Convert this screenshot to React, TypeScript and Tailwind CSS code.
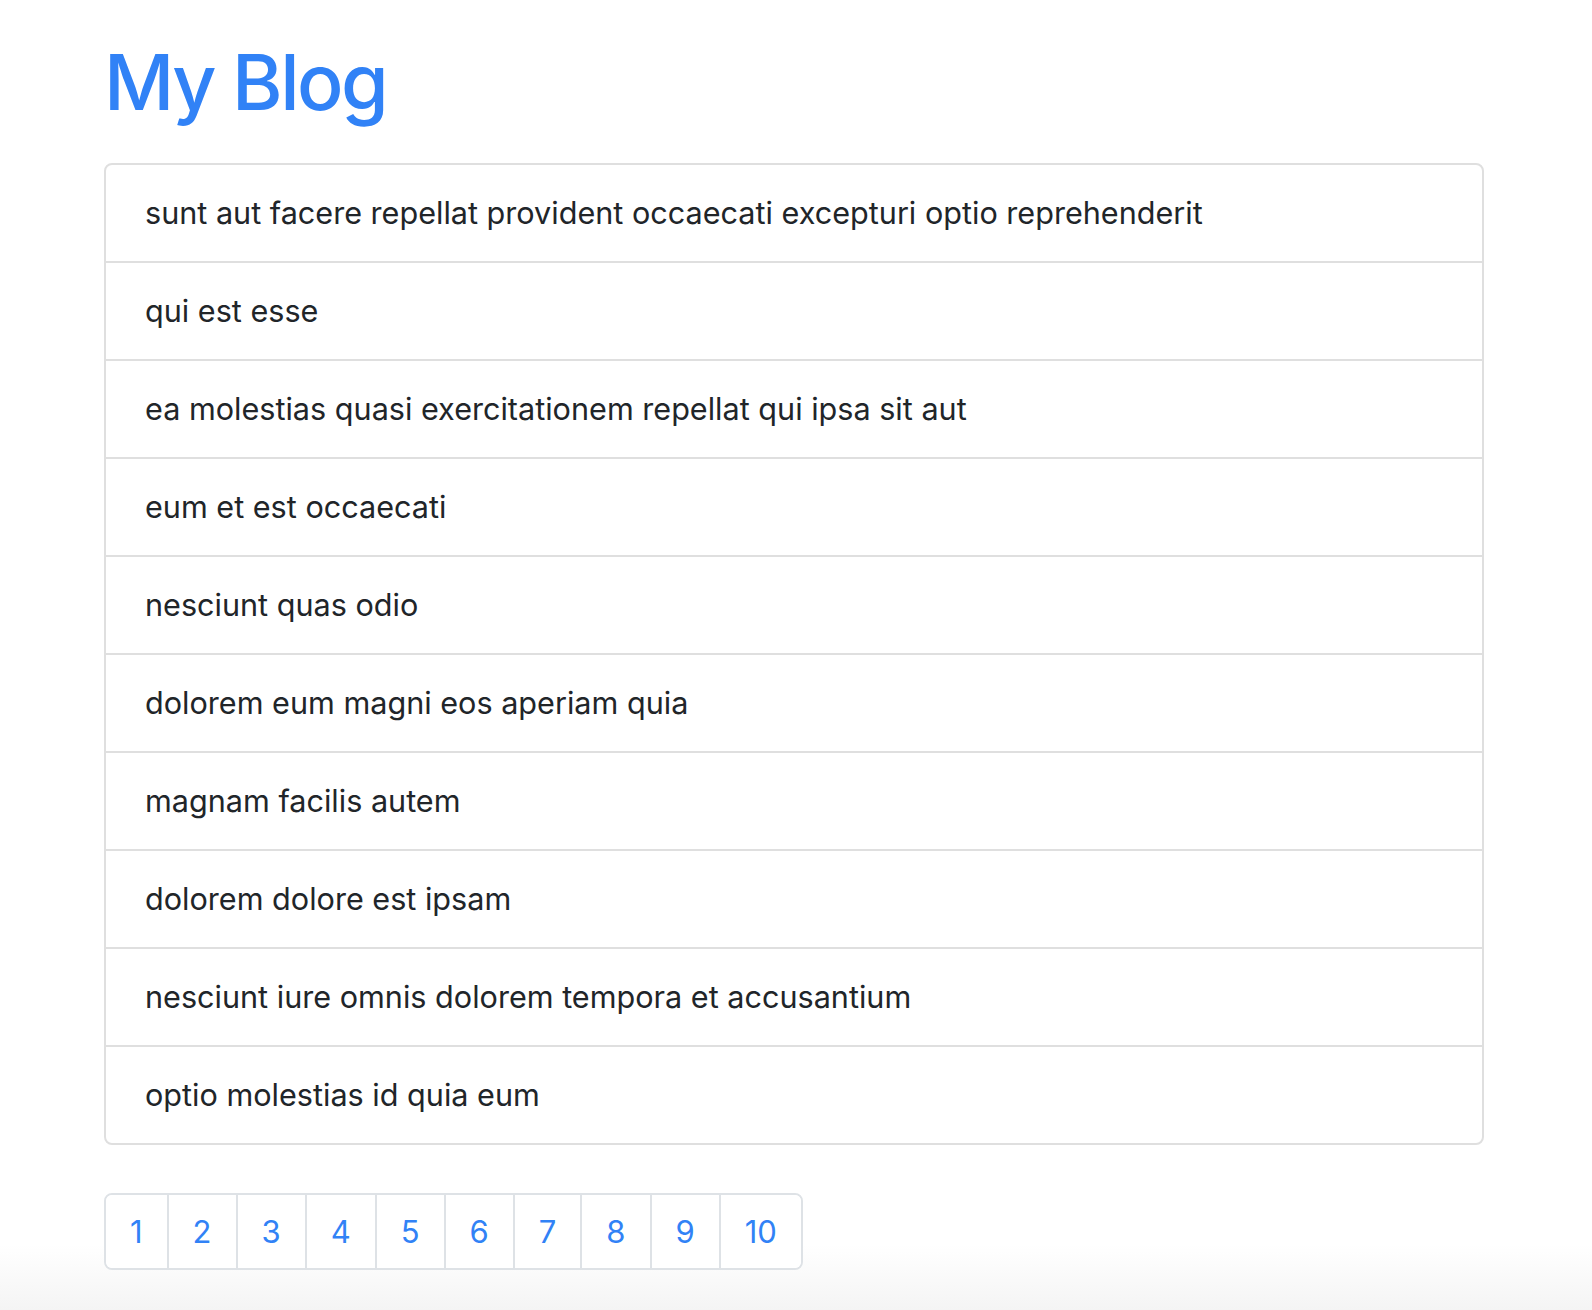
import React, { useState } from 'react';

const posts = [
  'sunt aut facere repellat provident occaecati excepturi optio reprehenderit',
  'qui est esse',
  'ea molestias quasi exercitationem repellat qui ipsa sit aut',
  'eum et est occaecati',
  'nesciunt quas odio',
  'dolorem eum magni eos aperiam quia',
  'magnam facilis autem',
  'dolorem dolore est ipsam',
  'nesciunt iure omnis dolorem tempora et accusantium',
  'optio molestias id quia eum',
];

const pages = [1, 2, 3, 4, 5, 6, 7, 8, 9, 10];

const App: React.FC = () => {
  const [page, setPage] = useState(1);

  return (
    <div
      className="min-h-[1310px] bg-[linear-gradient(to_bottom,#ffffff_1245px,#f4f4f4_1310px)] text-[#212529]"
      style={{ fontFamily: 'Inter, "Noto Sans", "Liberation Sans", sans-serif' }}
    >
      <div className="pl-[104px] w-[1484px] pt-[34px]">
        <h1 className="text-[77px] leading-[96px] font-medium text-[#3182f6] tracking-[-2.5px] mb-[33px]">
          My Blog
        </h1>

        <ul className="border-2 border-[#dfdfdf] rounded-[8px] overflow-hidden">
          {posts.map((title, i) => (
            <li
              key={i}
              className={`px-[39px] py-[24px] text-[30.6px] leading-[48px] ${
                i > 0 ? 'border-t-2 border-[#dfdfdf]' : ''
              }`}
            >
              {title}
            </li>
          ))}
        </ul>

        <nav className="mt-[48px] flex">
          <ul className="flex border-2 border-[#dee2e6] rounded-[8px] overflow-hidden">
            {pages.map((p) => (
              <li key={p} className={p > 1 ? 'border-l-2 border-[#dee2e6]' : ''}>
                <button
                  onClick={() => setPage(p)}
                  className={`px-[24px] py-[16px] text-[31px] leading-[41px] text-[#3182f6] ${
                    page === p ? 'bg-white' : 'bg-white'
                  }`}
                >
                  {p}
                </button>
              </li>
            ))}
          </ul>
        </nav>
      </div>
    </div>
  );
};

export default App;
